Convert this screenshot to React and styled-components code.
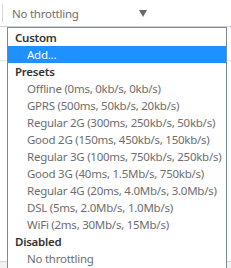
import React from 'react'
import styled, { createGlobalStyle } from 'styled-components'

const GlobalStyle = createGlobalStyle`
    html, body {
        margin: 0;
        padding: 0;
        background: #fff;
    }
    body {
        font-family: "Noto Sans", "Open Sans", sans-serif;
        font-size: 11.5px;
        letter-spacing: -0.25px;
    }
`

const StyledPage = styled.div`
    position: relative;
    width: 231px;
    height: 268px;
    overflow: hidden;
    background: #fff;
`

const StyledToolbar = styled.div`
    height: 26px;
    border-bottom: 1px solid #d0d0d0;
    display: flex;
    align-items: center;
    padding-left: 2px;
`

const StyledSelect = styled.div`
    display: flex;
    align-items: center;
    height: 18px;
    border-left: 1px solid #d6d6d6;
    padding-left: 9px;
    width: 135px;
    color: #6e6e6e;
`

const StyledArrow = styled.span`
    margin-left: auto;
    width: 0;
    height: 0;
    border-left: 4px solid transparent;
    border-right: 4px solid transparent;
    border-top: 7px solid #6a6a6a;
`

const StyledBackRow = styled.div`
    height: 33px;
    border-bottom: 1px solid #e4e4e4;
`

const StyledFooter = styled.div`
    position: absolute;
    left: 0;
    right: 0;
    bottom: 0;
    height: 6px;
    border-top: 1px solid #d6d6d6;
    background: #f3f3f3;
`

const StyledListbox = styled.div`
    position: absolute;
    left: 7px;
    top: 27px;
    width: 218px;
    height: 260px;
    border: 1px solid #7a8a9a;
    background: #fff;
    padding-top: 1px;
`

const StyledGroup = styled.div`
    height: 17px;
    line-height: 17px;
    padding-left: 7px;
    font-weight: 600;
    color: #333;
`

const StyledOption = styled.div`
    height: 17px;
    line-height: 17px;
    padding-left: 19px;
    white-space: nowrap;
    color: ${props => props.selected ? '#fff' : '#6e6e6e'};
    background: ${props => props.selected ? '#1e90ff' : 'transparent'};
`

const groups = [
    { label: 'Custom', options: ['Add...'] },
    {
        label: 'Presets',
        options: [
            'Offline (0ms, 0kb/s, 0kb/s)',
            'GPRS (500ms, 50kb/s, 20kb/s)',
            'Regular 2G (300ms, 250kb/s, 50kb/s)',
            'Good 2G (150ms, 450kb/s, 150kb/s)',
            'Regular 3G (100ms, 750kb/s, 250kb/s)',
            'Good 3G (40ms, 1.5Mb/s, 750kb/s)',
            'Regular 4G (20ms, 4.0Mb/s, 3.0Mb/s)',
            'DSL (5ms, 2.0Mb/s, 1.0Mb/s)',
            'WiFi (2ms, 30Mb/s, 15Mb/s)',
        ],
    },
    { label: 'Disabled', options: ['No throttling'] },
]

export default function App() {
    return (
        <StyledPage>
            <GlobalStyle />
            <StyledToolbar>
                <StyledSelect>
                    No throttling
                    <StyledArrow />
                </StyledSelect>
            </StyledToolbar>
            <StyledBackRow />
            <StyledFooter />
            <StyledListbox>
                {groups.map(group => (
                    <React.Fragment key={group.label}>
                        <StyledGroup>{group.label}</StyledGroup>
                        {group.options.map(opt => (
                            <StyledOption key={opt} selected={opt === 'Add...'}>
                                {opt}
                            </StyledOption>
                        ))}
                    </React.Fragment>
                ))}
            </StyledListbox>
        </StyledPage>
    )
}
